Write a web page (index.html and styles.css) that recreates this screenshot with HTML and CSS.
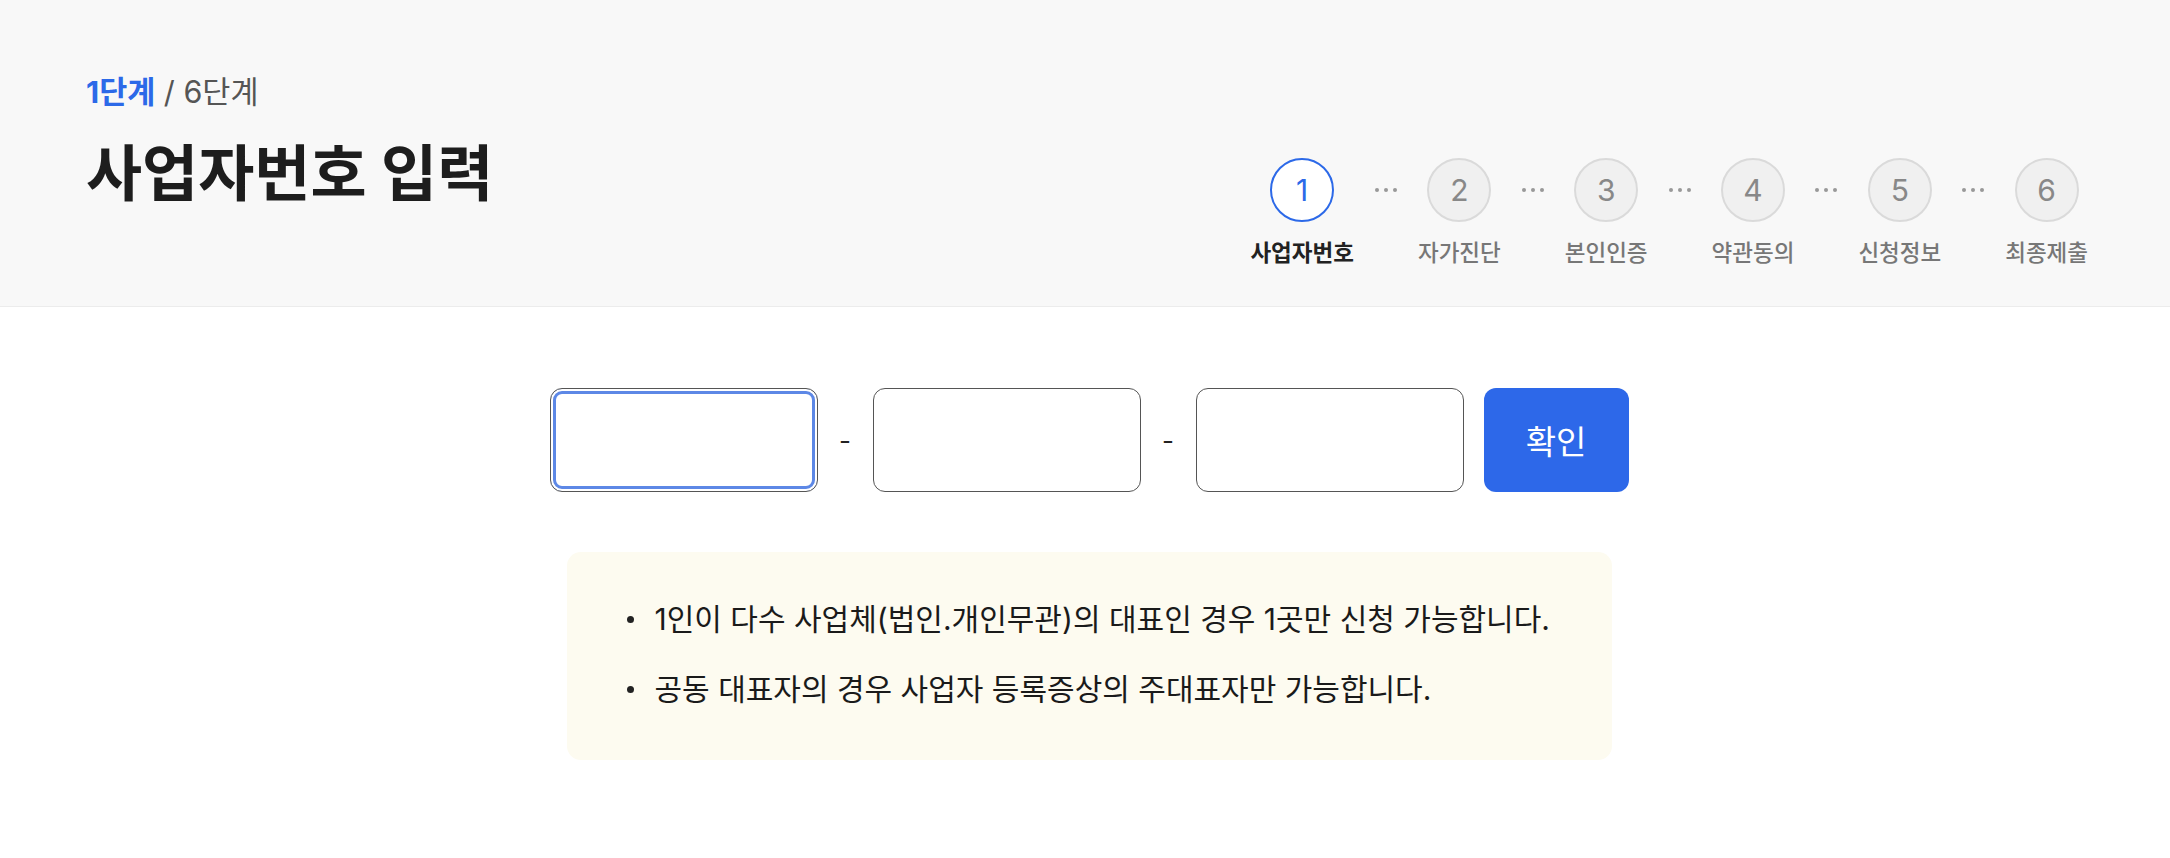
FILE: index.html
```html
<!DOCTYPE html>
<html lang="ko">
<head>
	<meta charset="utf-8">
	<title>사업자번호 입력</title>
	<link rel="stylesheet" href="styles.css">
</head>
<body>
	<header class="top">
		<div class="heading">
			<p class="stage"><span class="stage-now">1단계</span> / 6단계</p>
			<h1 class="title">사업자번호 입력</h1>
		</div>
		<ol class="steps">
			<li class="step active"><span class="num">1</span><span class="label">사업자번호</span></li>
			<li class="dots"><i></i><i></i><i></i></li>
			<li class="step"><span class="num">2</span><span class="label">자가진단</span></li>
			<li class="dots"><i></i><i></i><i></i></li>
			<li class="step"><span class="num">3</span><span class="label">본인인증</span></li>
			<li class="dots"><i></i><i></i><i></i></li>
			<li class="step"><span class="num">4</span><span class="label">약관동의</span></li>
			<li class="dots"><i></i><i></i><i></i></li>
			<li class="step"><span class="num">5</span><span class="label">신청정보</span></li>
			<li class="dots"><i></i><i></i><i></i></li>
			<li class="step"><span class="num">6</span><span class="label">최종제출</span></li>
		</ol>
	</header>

	<main class="main">
		<div class="biz-row">
			<input class="biz-input focused" type="text" maxlength="3">
			<span class="dash">-</span>
			<input class="biz-input" type="text" maxlength="2">
			<span class="dash">-</span>
			<input class="biz-input" type="text" maxlength="5">
			<button class="btn-confirm" type="button">확인</button>
		</div>

		<ul class="notice">
			<li>1인이 다수 사업체(법인.개인무관)의 대표인 경우 1곳만 신청 가능합니다.</li>
			<li>공동 대표자의 경우 사업자 등록증상의 주대표자만 가능합니다.</li>
		</ul>
	</main>
</body>
</html>
```

FILE: styles.css
```css
body {
	margin: 0;
	background: #fff;
	font-family: Inter, "Noto Sans CJK KR", sans-serif;
	color: #1a1a1a;
}

.top {
	display: flex;
	justify-content: space-between;
	align-items: flex-start;
	height: 307px;
	box-sizing: border-box;
	padding: 72px 82px 0 86px;
	background: #f8f8f8;
	border-bottom: 1px solid #ececec;
}

.stage {
	margin: 0;
	font-size: 30.5px;
	line-height: 39px;
	color: #555;
}

.stage-now {
	color: #2c69e8;
	font-weight: 700;
}

.title {
	margin: 24px 0 0;
	font-size: 61px;
	line-height: 78px;
	font-weight: 700;
	color: #1d1d1d;
}

.steps {
	list-style: none;
	margin: 86px 0 0;
	padding: 0;
	display: flex;
	align-items: flex-start;
}

.step {
	display: flex;
	flex-direction: column;
	align-items: center;
}

.num {
	width: 64px;
	height: 64px;
	box-sizing: border-box;
	border: 2px solid #dadada;
	border-radius: 50%;
	background: #f0f0f0;
	color: #888;
	font-size: 30px;
	display: flex;
	align-items: center;
	justify-content: center;
}

.label {
	margin-top: 17px;
	font-size: 22.5px;
	line-height: 28px;
	color: #777;
	font-weight: 500;
}

.step.active .num {
	border-color: #2c69e8;
	background: #fff;
	color: #2c69e8;
}

.step.active .label {
	color: #222;
	font-weight: 700;
}

.dots {
	width: 64px;
	height: 64px;
	display: flex;
	align-items: center;
	justify-content: center;
	gap: 5px;
}

.dots i {
	width: 4px;
	height: 4px;
	border-radius: 50%;
	background: #999;
}

.main {
	padding: 81px 0 0 8px;
	display: flex;
	flex-direction: column;
	align-items: center;
}

.biz-row {
	display: flex;
	align-items: center;
	gap: 20px;
}

.biz-input {
	width: 268px;
	height: 104px;
	box-sizing: border-box;
	border: 1px solid #555;
	border-radius: 12px;
	background: #fff;
	padding: 0 16px;
	font-family: inherit;
	font-size: 28px;
	outline: none;
}

.biz-input.focused {
	box-shadow: inset 0 0 0 2px #fff, inset 0 0 0 5px #5d88e6;
}

.dash {
	width: 15px;
	text-align: center;
	font-size: 26px;
	color: #222;
}

.btn-confirm {
	width: 145px;
	height: 104px;
	border: 0;
	border-radius: 12px;
	background: #2d68e9;
	color: #fff;
	font-family: inherit;
	font-size: 33px;
}

.notice {
	margin: 60px 0 0;
	width: 1045px;
	box-sizing: border-box;
	padding: 44px 0 48px 60px;
	background: #fdfbf0;
	border-radius: 14px;
	list-style: none;
}

.notice li {
	position: relative;
	padding-left: 28px;
	font-size: 30px;
	line-height: 46px;
	color: #1a1a1a;
}

.notice li + li {
	margin-top: 24px;
}

.notice li::before {
	content: "";
	position: absolute;
	left: 0;
	top: 20px;
	width: 7px;
	height: 7px;
	border-radius: 50%;
	background: #222;
}
```
